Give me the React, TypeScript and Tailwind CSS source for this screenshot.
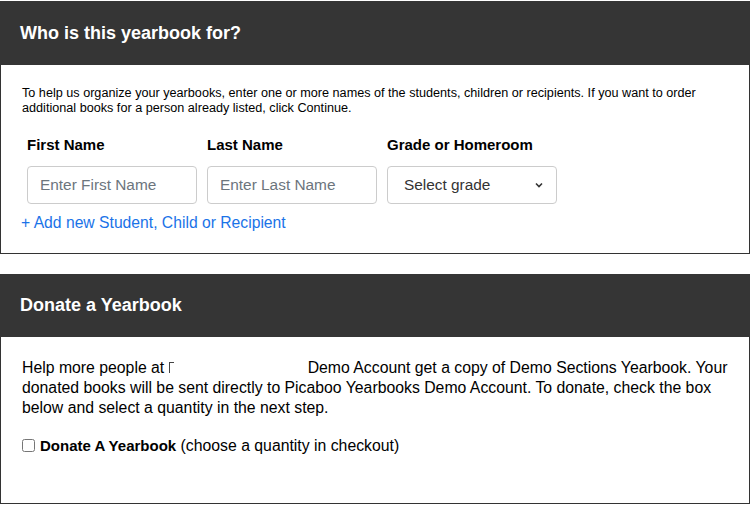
import React from "react";

export default function App() {
  const font = { fontFamily: "'Liberation Sans', Arial, sans-serif" };
  return (
    <div className="bg-white w-[751px] h-[505px] pt-px" style={font}>
      <div className="w-[750px] border border-[#333] border-t-0">
        <div className="bg-[#353535] h-[64px] flex items-center px-5 -mx-px">
          <h2 className="text-white text-[18px] font-bold">Who is this yearbook for?</h2>
        </div>
        <div className="px-[21px] pt-[21px] pb-[21px]">
          <p className="text-[12.65px] leading-[15px] text-black">
            To help us organize your yearbooks, enter one or more names of the students, children or recipients. If you want to order additional books for a person already listed, click Continue.
          </p>
          <div className="flex gap-[10px] mt-[20px] pl-[5px]">
            {[
              ["First Name", "Enter First Name"],
              ["Last Name", "Enter Last Name"],
            ].map(([l, p]) => (
              <div key={l} className="w-[170px] flex flex-col">
                <label className="text-[15px] font-bold text-black leading-[18px]">{l}</label>
                <input
                  placeholder={p}
                  className="mt-[12px] h-[38px] w-[170px] border border-[#ccc] rounded-[4px] px-3 text-[15.4px] placeholder:text-[#6c757d] outline-none"
                  style={font}
                />
              </div>
            ))}
            <div className="w-[170px] flex flex-col">
              <label className="text-[15px] font-bold text-black leading-[18px]">Grade or Homeroom</label>
              <div className="mt-[12px] h-[38px] w-[170px] border border-[#ccc] rounded-[4px] pl-4 pr-3 flex items-center justify-between text-[15.4px] text-[#333]">
                <span>Select grade</span>
                <svg width="10" height="10" viewBox="0 0 10 10">
                  <path d="M2 3.5 L5 6.5 L8 3.5" fill="none" stroke="#333" strokeWidth="1.6" />
                </svg>
              </div>
            </div>
          </div>
          <div className="mt-[10px] -ml-px text-[15.7px] text-[#1a73e8] leading-[18px]">+ Add new Student, Child or Recipient</div>
        </div>
      </div>

      <div className="w-[750px] border border-[#333] border-t-0 mt-[20px] h-[230px]">
        <div className="bg-[#353535] h-[63px] flex items-center px-5 -mx-px">
          <h2 className="text-white text-[18px] font-bold">Donate a Yearbook</h2>
        </div>
        <div className="px-[21px] pt-[21px]">
          <p className="text-[15.8px] leading-[20px] text-black">
            Help more people at{" "}
            <span className="inline-block w-[139px] h-[11px] align-baseline">
              <span className="block w-[5px] h-[11px] border-l-[1.5px] border-t-[1.5px] border-[#444]" />
            </span>
            Demo Account get a copy of Demo Sections Yearbook. Your donated books will be sent directly to Picaboo Yearbooks Demo Account. To donate, check the box below and select a quantity in the next step.
          </p>
          <label className="flex items-center mt-[16px] text-[15.8px] text-black">
            <input type="checkbox" className="w-[13px] h-[13px] mr-[5px]" />
            <span><b className="text-[15px]">Donate A Yearbook</b> (choose a quantity in checkout)</span>
          </label>
        </div>
      </div>
    </div>
  );
}
